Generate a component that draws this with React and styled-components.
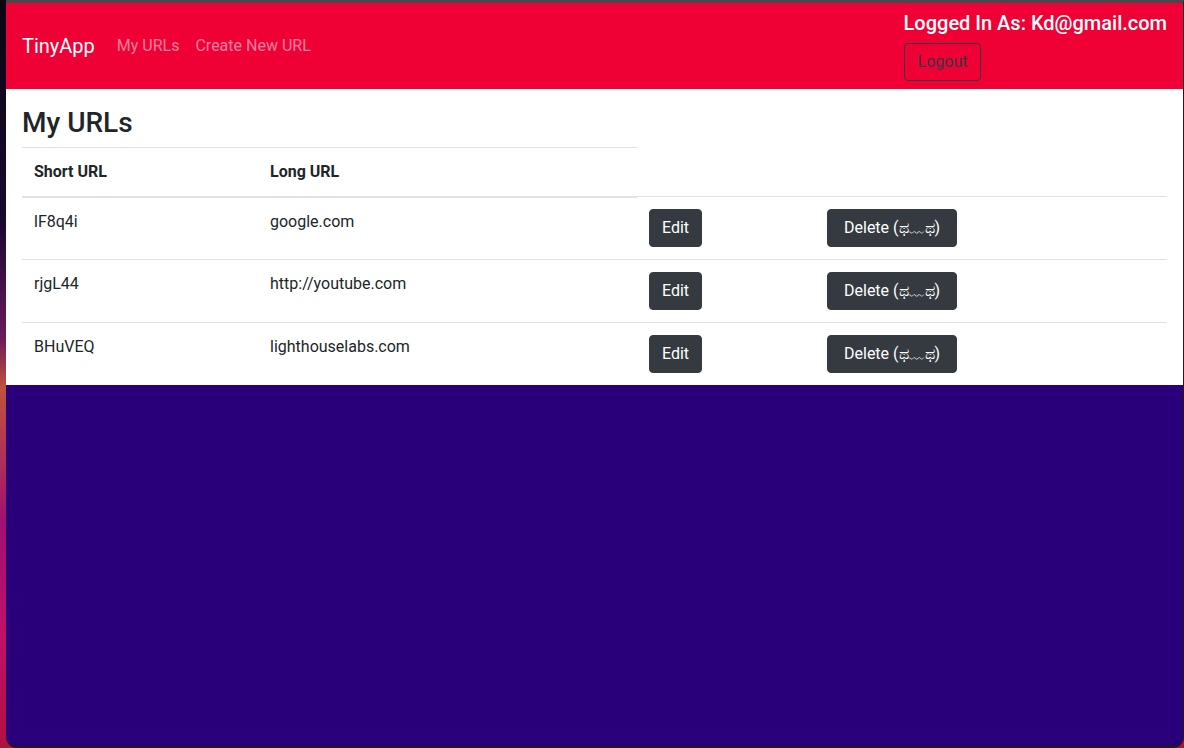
import React from 'react'
import styled, { createGlobalStyle } from 'styled-components';

const GlobalStyle = createGlobalStyle`
  * { box-sizing: border-box; }
  html, body { margin: 0; padding: 0; }
  body {
    height: 748px;
    overflow: hidden;
    font-family: Roboto, "Liberation Sans", sans-serif;
    background: linear-gradient(180deg, #0b0612 0%, #1a0830 30%, #6a1a5a 45%, #c2513c 52%, #a01070 70%, #c0106c 85%, #b0103e 100%);
  }
`;

const urls = [
  { short: 'lF8q4i', long: 'google.com' },
  { short: 'rjgL44', long: 'http://youtube.com' },
  { short: 'BHuVEQ', long: 'lighthouselabs.com' },
];

const App = () => {
  return (
    <>
      <GlobalStyle />
      <Desktop>
        <Window>
          <Navbar>
            <NavLeft>
              <Brand href="#">TinyApp</Brand>
              <NavLink href="#">My URLs</NavLink>
              <NavLink href="#">Create New URL</NavLink>
            </NavLeft>
            <NavRight>
              <LoggedIn>Logged In As: Kd@gmail.com</LoggedIn>
              <OutlineButton>Logout</OutlineButton>
            </NavRight>
          </Navbar>
          <Main>
            <Title>My URLs</Title>
            <Table>
              <colgroup>
                <col width="236" />
                <col width="379" />
                <col width="178" />
                <col width="352" />
              </colgroup>
              <thead>
                <tr>
                  <Th>Short URL</Th>
                  <Th>Long URL</Th>
                </tr>
              </thead>
              <tbody>
                {urls.map((u) => (
                  <tr key={u.short}>
                    <Td>{u.short}</Td>
                    <Td>{u.long}</Td>
                    <Td><DarkButton>Edit</DarkButton></Td>
                    <Td><DarkButton $wide>Delete (ಥ﹏ಥ)</DarkButton></Td>
                  </tr>
                ))}
              </tbody>
            </Table>
          </Main>
        </Window>
      </Desktop>
    </>
  )
};

const Desktop = styled.div`
  height: 748px;
  padding-left: 6px;
  display: flex;
`;

const Window = styled.div`
  flex: 1;
  display: flex;
  flex-direction: column;
  background-color: #29007a;
  border-top: 3px solid #46484b;
  border-right: 1px solid #1c1c1e;
  border-bottom: 2px solid #1c1c1e;
  border-radius: 0 0 11px 11px;
  overflow: hidden;
`;

const Navbar = styled.nav`
  display: flex;
  justify-content: space-between;
  align-items: center;
  padding: 8px 16px;
  background-color: #ef0035;
`;

const NavLeft = styled.div`
  display: flex;
  align-items: center;
`;

const Brand = styled.a`
  font-size: 20px;
  line-height: 30px;
  color: #fff;
  text-decoration: none;
  margin-right: 14px;
`;

const NavLink = styled.a`
  font-size: 16px;
  line-height: 24px;
  padding: 8px;
  color: rgba(255, 255, 255, 0.5);
  text-decoration: none;
`;

const NavRight = styled.div`
  display: flex;
  flex-direction: column;
  align-items: flex-start;
`;

const LoggedIn = styled.h5`
  margin: 0 0 8px;
  font-size: 20px;
  font-weight: 500;
  line-height: 24px;
  color: #fff;
`;

const OutlineButton = styled.button`
  font-family: inherit;
  font-size: 16px;
  line-height: 24px;
  padding: 6px 13px;
  border: 1px solid #343a40;
  border-radius: 4px;
  background: transparent;
  color: #343a40;
`;

const Main = styled.main`
  background-color: #fff;
  padding: 17px 16px 0;
  color: #212529;
`;

const Title = styled.h3`
  margin: 0 0 7px;
  font-size: 28px;
  font-weight: 500;
  line-height: 33.6px;
`;

const Table = styled.table`
  width: 100%;
  border-collapse: collapse;
  table-layout: fixed;
`;

const Th = styled.th`
  text-align: left;
  font-size: 16px;
  font-weight: 700;
  line-height: 24px;
  padding: 12px;
  border-top: 1px solid #dee2e6;
  border-bottom: 2px solid #dee2e6;
`;

const Td = styled.td`
  font-size: 16px;
  line-height: 24px;
  padding: 12px;
  vertical-align: top;
  border-top: 1px solid #dee2e6;
`;

const DarkButton = styled.button`
  font-family: inherit;
  font-size: 16px;
  line-height: 24px;
  padding: ${(p) => (p.$wide ? '6px 16px' : '6px 12px')};
  border: 1px solid #343a40;
  border-radius: 4px;
  background-color: #343a40;
  color: #fff;
`;

export default App
